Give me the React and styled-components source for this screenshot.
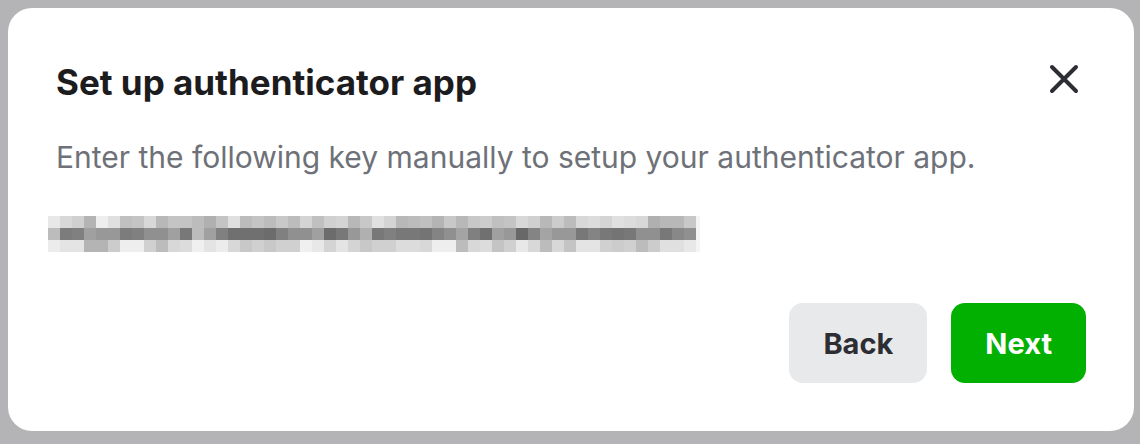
import styled, { createGlobalStyle } from "styled-components";

// -------------- GLOBAL --------------- //
const GlobalStyle = createGlobalStyle`
  html, body {
    margin: 0;
    padding: 0;
    background: #b4b4b6;
    font-family: Inter, "Noto Sans", "Liberation Sans", sans-serif;
  }
`;

// grey levels of the masked key, one list per row of blocks
const keyRows = [
  "e8 d8 d0 b4 ee e0 c0 c4 d8 b8 c4 c4 bc b0 c4 e0 bc c4 bc c8 bc d4 c0 d0 d4 b8 c8 e0 d4 b8 bc c0 b4 c8 b8 c8 cc c0 c4 d8 d0 b8 cc bc d8 dc d4 e0 dc d8 b0 b8 b8 c8",
  "bc 7c 80 a0 98 98 7c 80 90 90 a0 78 bc a0 80 70 70 70 6c 80 90 90 a0 6c 78 98 b0 78 80 78 78 74 84 90 a4 80 70 a0 98 68 84 a4 98 98 78 84 78 74 78 90 90 78 88 90",
  "ec e4 e4 b4 b4 cc ee ee d0 bc d8 dc f0 e4 ec d8 c8 d0 c8 d0 d0 f0 e8 d4 e4 d4 c8 d0 d0 dc dc d8 ee ee bc d8 dc c4 d0 e8 d8 bc d8 c4 e4 e4 d0 cc d0 bc cc e0 e0 e8",
].map((row) => row.split(" "));

const block = 12;

// -------------- STYLED COMPONENTS --------------- //
const Page = styled.div`
  padding: 8px 6px 13px 8px;
`;

const Modal = styled.div`
  box-sizing: border-box;
  width: 1126px;
  height: 423px;
  background: #ffffff;
  border-radius: 24px;
  padding: 52px 48px 48px;
  display: flex;
  flex-direction: column;
`;

const Header = styled.div`
  display: flex;
  align-items: flex-start;
  justify-content: space-between;
`;

const Title = styled.h2`
  margin: 0;
  font-size: 35px;
  line-height: 44px;
  font-weight: 700;
  color: #1c1c1e;
`;

const CloseButton = styled.button`
  border: none;
  background: none;
  padding: 0;
  width: 34px;
  height: 34px;
  margin: 2px 5px 0 0;
  display: flex;
  align-items: center;
  justify-content: center;
  cursor: pointer;
`;

const Subtitle = styled.p`
  margin: 35px 0 0;
  font-size: 30px;
  line-height: 36px;
  color: #6e7178;
`;

const KeyMask = styled.svg`
  display: block;
  margin: 41px 0 0 -8px;
`;

const Footer = styled.div`
  margin-top: auto;
  display: flex;
  justify-content: flex-end;
  gap: 24px;
`;

const Button = styled.button`
  height: 80px;
  padding: 0 34px;
  border: none;
  border-radius: 14px;
  font-family: inherit;
  font-size: 29px;
  font-weight: 700;
  cursor: pointer;
  background: ${(p) => (p.$primary ? "#02b002" : "#e8e9eb")};
  color: ${(p) => (p.$primary ? "#ffffff" : "#2d2e33")};
`;

export default function App() {
  const cols = keyRows[0].length;

  return (
    <Page>
      <GlobalStyle />
      <Modal>
        <Header>
          <Title>Set up authenticator app</Title>
          <CloseButton aria-label="Close">
            <svg width="30" height="30" viewBox="0 0 30 30" fill="none">
              <path
                d="M3 3 L27 27 M27 3 L3 27"
                stroke="#2d2e33"
                strokeWidth="4"
                strokeLinecap="round"
              />
            </svg>
          </CloseButton>
        </Header>
        <Subtitle>
          Enter the following key manually to setup your authenticator app.
        </Subtitle>
        <KeyMask width={cols * block + 4} height={block * 3}>
          {keyRows.map((row, r) =>
            row.map((hex, c) => (
              <rect
                key={`${r}-${c}`}
                x={c * block}
                y={r * block}
                width={block}
                height={block}
                fill={`#${hex}${hex}${hex}`}
              />
            ))
          )}
          <rect x={cols * block} y={0} width={4} height={block * 3} fill="#f4f4f4" />
        </KeyMask>
        <Footer>
          <Button>Back</Button>
          <Button $primary>Next</Button>
        </Footer>
      </Modal>
    </Page>
  );
}
